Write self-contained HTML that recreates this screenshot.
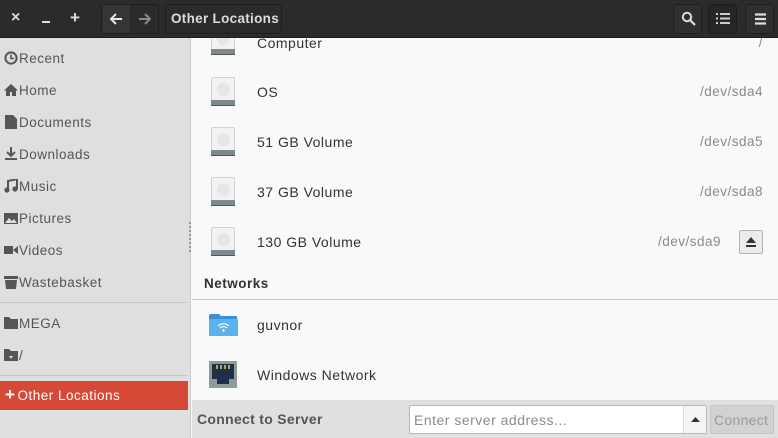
<!DOCTYPE html>
<html><head><style>
*{margin:0;padding:0;box-sizing:border-box}
body{width:778px;height:438px;overflow:hidden;font-family:"Liberation Sans","DejaVu Sans",sans-serif;font-size:13.5px;background:#f9f9f9;position:relative;color:#2e3436;letter-spacing:0.5px}
.hdr{position:absolute;left:0;top:0;width:778px;height:38px;background:#2b2b2b;border-bottom:1px solid #1c1c1c;z-index:10}
.hb{position:absolute;top:4px;height:30px;border:1px solid #1e1e1e;border-radius:3px;background:#2f2f2f;color:#ddd}
.side{position:absolute;left:0;top:38px;width:191px;height:400px;background:#dfdfdf;border-right:1px solid #cfcfcf}
.si{position:absolute;left:4px;height:20px;color:#555;display:flex;align-items:center;font-size:13.5px}
.si svg{margin-right:1px}
.sep{position:absolute;left:0;width:188px;height:1px;background:#c6c6c6}
.row{position:absolute;left:192px;width:586px;height:50px}
.drv{position:absolute;left:19px;top:10px;width:24px;height:29px;background:#f2f2f2;border:1px solid #d2d2d2;border-bottom:none;border-radius:2px}
.drv:before{content:"";position:absolute;left:5px;top:5px;width:13px;height:13px;border-radius:50%;background:#e6e6e6}
.drv:after{content:"";position:absolute;left:-1px;bottom:0;width:24px;height:5px;background:#7e8a90;border-bottom:1px solid #555}
.nm{position:absolute;left:65px;top:17px;font-size:14px;color:#2e3436}
.dv{position:absolute;right:15px;top:17px;font-size:13.5px;color:#8a8a8a}
</style></head><body>
<div class="hdr">
 <div style="position:absolute;left:11px;top:9px;color:#ddd;font-size:16px;font-weight:bold">×</div>
 <div style="position:absolute;left:42px;top:21px;width:8px;height:2px;background:#ddd"></div>
 <div style="position:absolute;left:70px;top:8px;color:#ddd;font-size:17px;font-weight:bold">+</div>
 <div class="hb" style="left:101px;width:58px;background:#2b2b2b"><div style="position:absolute;left:0;top:0;width:28px;height:28px;background:#353535"></div>
  <svg style="position:absolute;left:7px;top:7px" width="14" height="14"><path d="M13 7H2M7 2L2 7l5 5" stroke="#e8e8e8" stroke-width="2" fill="none"/></svg>
  <svg style="position:absolute;left:36px;top:7px" width="14" height="14"><path d="M1 7h11M7 2l5 5-5 5" stroke="#8a8a8a" stroke-width="2" fill="none"/></svg></div>
 <div class="hb" style="left:165px;width:117px;background:#2b2b2b;font-weight:bold;font-size:13.5px;padding:6px 0 0 5px;color:#dcdcdc;letter-spacing:0.3px">Other Locations</div>
 <div class="hb" style="left:673px;width:29px"><svg style="position:absolute;left:7px;top:6px" width="16" height="16"><circle cx="6" cy="6" r="4.2" stroke="#ddd" stroke-width="2" fill="none"/><path d="M9 9l5 5" stroke="#ddd" stroke-width="2.2"/></svg></div>
 <div class="hb" style="left:708px;width:29px;background:#262626"><svg style="position:absolute;left:7px;top:8px" width="14" height="12"><path d="M0 1h2M0 5.5h2M0 10h2M4 1h10M4 5.5h10M4 10h10" stroke="#ccc" stroke-width="2"/></svg></div>
 <div class="hb" style="left:745px;width:29px"><svg style="position:absolute;left:9px;top:8px" width="12" height="12"><path d="M0 1.5h11M0 6h11M0 10.5h11" stroke="#ddd" stroke-width="2.2"/></svg></div>
</div>
<div class="side">
 <div class="si" style="top:10px"><svg width="14" height="14"><circle cx="7" cy="7" r="5.6" stroke="#555" stroke-width="2" fill="none"/><path d="M7 3.5V7.5h3" stroke="#555" stroke-width="1.6" fill="none"/></svg>Recent</div>
 <div class="si" style="top:42px"><svg width="14" height="14"><path d="M7 1L0 7.5h2V13h4V9h2v4h4V7.5h2z" fill="#555"/></svg>Home</div>
 <div class="si" style="top:74px"><svg width="14" height="14"><path d="M1 0h8l4 4v10H1z" fill="#555"/></svg>Documents</div>
 <div class="si" style="top:106px"><svg width="14" height="14"><path d="M7 0v8M3 5l4 4 4-4" stroke="#555" stroke-width="2" fill="none"/><path d="M1 12h12" stroke="#555" stroke-width="2"/></svg>Downloads</div>
 <div class="si" style="top:138px"><svg width="14" height="14"><path d="M4 11V2l9-2v10" stroke="#555" stroke-width="2" fill="none"/><circle cx="3" cy="11" r="2.6" fill="#555"/><circle cx="11" cy="10" r="2.6" fill="#555"/></svg>Music</div>
 <div class="si" style="top:170px"><svg width="14" height="14"><rect x="0" y="2" width="14" height="11" fill="#555"/><path d="M1 12l4-5 3 3 2-2 3 4z" fill="#ddd"/></svg>Pictures</div>
 <div class="si" style="top:202px"><svg width="14" height="14"><rect x="0" y="3" width="9" height="8" fill="#555"/><path d="M9 7l5-4v8z" fill="#555"/></svg>Videos</div>
 <div class="si" style="top:234px"><svg width="14" height="14"><rect x="0" y="1" width="14" height="3" fill="#555"/><path d="M1 5h12l-1 9H2z" fill="#555"/></svg>Wastebasket</div>
 <div class="sep" style="top:264px"></div>
 <div class="si" style="top:275px"><svg width="14" height="14"><path d="M0 1h5l2 2h7v10H0z" fill="#555"/></svg>MEGA</div>
 <div class="si" style="top:307px"><svg width="14" height="14"><path d="M0 1h5l2 2h7v10H0z" fill="#555"/><path d="M5 8h4L7 11z" fill="#ddd"/></svg>/</div>
 <div class="sep" style="top:337px"></div>
 <div style="position:absolute;left:0;top:343px;width:188px;height:29px;background:#d64937;color:#fff;font-size:13.5px;padding:7px 0 0 5px"><span style="font-weight:bold;font-size:17px;line-height:14px;margin-right:2px">+</span>Other Locations</div>
 <div style="position:absolute;left:189px;top:184px;width:2px;height:30px;border-left:2px dotted #999"></div>
</div>
<div class="row" style="top:17px"><div class="drv" style="top:9px"></div><div class="nm" style="top:18px">Computer</div><div class="dv" style="top:18px">/</div></div>
<div class="row" style="top:67px"><div class="drv"></div><div class="nm">OS</div><div class="dv">/dev/sda4</div></div>
<div class="row" style="top:117px"><div class="drv"></div><div class="nm">51 GB Volume</div><div class="dv">/dev/sda5</div></div>
<div class="row" style="top:167px"><div class="drv"></div><div class="nm">37 GB Volume</div><div class="dv">/dev/sda8</div></div>
<div class="row" style="top:217px"><div class="drv"></div><div class="nm">130 GB Volume</div><div class="dv" style="right:57px">/dev/sda9</div>
 <div style="position:absolute;left:547px;top:13px;width:24px;height:24px;border:1px solid #b5b5b5;border-radius:2px;background:#ececec"><svg style="position:absolute;left:5px;top:6px" width="12" height="11"><path d="M6 0l5 6H1z" fill="#333"/><rect x="1" y="8" width="10" height="2" fill="#333"/></svg></div></div>
<div style="position:absolute;left:204px;top:276px;font-weight:bold;font-size:13.5px;color:#2e3436">Networks</div>
<div style="position:absolute;left:192px;top:299px;width:586px;height:1px;background:#c8c8c8"></div>
<div class="row" style="top:300px">
 <svg style="position:absolute;left:17px;top:14px" width="30" height="22"><path d="M0 2a2 2 0 0 1 2-2h8l2 2h16v20H0z" fill="#3a8fd6"/><rect x="0" y="5" width="29" height="17" rx="1" fill="#59b4ee"/><path d="M9 12a8 8 0 0 1 11 0M11 14a5 5 0 0 1 7 0" stroke="#fff" stroke-width="1.2" fill="none"/><circle cx="14.5" cy="16.5" r="1.2" fill="#fff"/></svg>
 <div class="nm">guvnor</div></div>
<div class="row" style="top:350px">
 <svg style="position:absolute;left:17px;top:11px" width="28" height="28"><rect x="0" y="0" width="28" height="27" fill="#8f9a9a"/><path d="M3 3h22v15h-5v5h-12v-5H3z" fill="#1f2f4a"/><path d="M8 4v4M12 4v4M16 4v4M20 4v4" stroke="#e5c040" stroke-width="1.6"/></svg>
 <div class="nm">Windows Network</div></div>
<div style="position:absolute;left:192px;top:400px;width:586px;height:38px;background:#e0e0e0">
 <div style="position:absolute;left:5px;top:11px;font-weight:bold;color:#555;font-size:14px;letter-spacing:0.3px">Connect to Server</div>
 <div style="position:absolute;left:217px;top:5px;width:298px;height:29px;background:#fff;border:1px solid #b8b8b8;border-radius:2px;color:#8a8a8a;padding:6px 0 0 4px;font-size:14px">Enter server address...
  <div style="position:absolute;right:0;top:0;width:23px;height:27px;border-left:1px solid #ddd;background:#f5f5f5"><svg style="position:absolute;left:7px;top:11px" width="9" height="5"><path d="M4.5 0L9 5H0z" fill="#333"/></svg></div></div>
 <div style="position:absolute;left:518px;top:5px;width:64px;height:29px;background:#d2d2d2;border:1px solid #c4c4c4;border-radius:2px;color:#9a9a9a;padding:6px 0 0 3px;font-size:14px;letter-spacing:0.3px">Connect</div>
</div>
</body></html>
